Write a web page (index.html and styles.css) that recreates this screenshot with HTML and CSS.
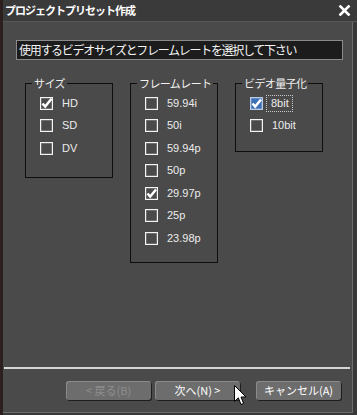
FILE: index.html
```html
<!DOCTYPE html>
<html lang="ja">
<head>
    <meta charset="UTF-8">
    <meta name="viewport" content="width=device-width, initial-scale=1.0">
    <title>プロジェクトプリセット作成</title>
    <link rel="stylesheet" href="styles.css">
</head>
<body>
    <div class="window">
        <div class="titlebar">
            <span class="title">プロジェクトプリセット作成</span>
            <svg class="close" width="13" height="11" viewBox="0 0 13 11">
                <path d="M1.5 0.5 L11.5 10.5 M11.5 0.5 L1.5 10.5" stroke="#fff" stroke-width="2.6"/>
            </svg>
        </div>

        <div class="client">
            <div class="prompt">使用するビデオサイズとフレームレートを選択して下さい</div>

            <div class="groups">
                <fieldset class="group group-size">
                    <legend>サイズ</legend>
                    <div class="row"><span class="box checked"><svg viewBox="0 0 13 13"><polyline points="2.5,6.5 5.2,9.6 11.5,1.8"/></svg></span><span class="label">HD</span></div>
                    <div class="row"><span class="box"></span><span class="label">SD</span></div>
                    <div class="row"><span class="box"></span><span class="label">DV</span></div>
                </fieldset>

                <fieldset class="group group-rate">
                    <legend>フレームレート</legend>
                    <div class="row"><span class="box"></span><span class="label">59.94i</span></div>
                    <div class="row"><span class="box"></span><span class="label">50i</span></div>
                    <div class="row"><span class="box"></span><span class="label">59.94p</span></div>
                    <div class="row"><span class="box"></span><span class="label">50p</span></div>
                    <div class="row"><span class="box checked"><svg viewBox="0 0 13 13"><polyline points="2.5,6.5 5.2,9.6 11,2.5"/></svg></span><span class="label">29.97p</span></div>
                    <div class="row"><span class="box"></span><span class="label">25p</span></div>
                    <div class="row"><span class="box"></span><span class="label">23.98p</span></div>
                </fieldset>

                <fieldset class="group group-bits">
                    <legend>ビデオ量子化</legend>
                    <div class="row"><span class="box checked blue"><svg viewBox="0 0 13 13"><polyline points="2.5,6.5 5.2,9.6 11,2.5"/></svg></span><span class="label focus">8bit</span></div>
                    <div class="row"><span class="box"></span><span class="label">10bit</span></div>
                </fieldset>
            </div>

            <div class="separator"></div>

            <div class="buttons">
                <button class="btn" disabled>&lt;&nbsp;戻る(B)</button>
                <button class="btn">次へ(N)&nbsp;&gt;</button>
                <button class="btn btn-cancel">キャンセル(A)</button>
            </div>
        </div>

        <!-- mouse pointer over the next button -->
        <svg class="cursor" width="13" height="21" viewBox="0 0 13 21">
            <path d="M0.5 0.5 L0.5 16.5 L4.3 12.8 L7 19.5 L9.6 18.4 L7 12 L12 12 Z" fill="#fff" stroke="#000" stroke-width="1"/>
        </svg>
    </div>
</body>
</html>
```

FILE: styles.css
```css
body {
    margin: 0;
    padding: 0;
    background-color: #3a3a3a;
    font-family: "Liberation Sans", "Noto Sans CJK JP", sans-serif;
}
.window {
    position: relative;
    width: 357px;
    height: 415px;
    box-sizing: border-box;
    border-left: 3px solid #2b201e;
    background-color: #393939;
    display: flex;
    flex-direction: column;
    overflow: hidden;
}
.titlebar {
    height: 21px;
    border-bottom: 1px solid #575757;
    background-color: #3a3a3a;
    display: flex;
    align-items: center;
    justify-content: space-between;
    padding: 0 6px 0 2px;
}
.title {
    color: #fff;
    font-family: "Noto Sans CJK JP", sans-serif;
    font-size: 11px;
    font-weight: bold;
    letter-spacing: -1px;
    line-height: 13px;
}
.close {
    display: block;
    margin-top: -1px;
}
.client {
    flex: 1;
    margin-right: 4px;
    margin-bottom: 2px;
    background-color: #4a4a4a;
    border-right: 1px solid #6d6d6d;
    border-bottom: 1px solid #6d6d6d;
    display: flex;
    flex-direction: column;
}
.prompt {
    margin: 18px 9px 0 13px;
    height: 20px;
    box-sizing: border-box;
    background-color: #1c1c1c;
    border: 1px solid #8a8a8a;
    color: #f4f4f4;
    font-family: "Noto Sans CJK JP", sans-serif;
    font-size: 12px;
    letter-spacing: -1.3px;
    line-height: 18px;
    padding-left: 2px;
    white-space: nowrap;
    overflow: hidden;
}
.groups {
    display: flex;
    align-items: flex-start;
    gap: 17px;
    margin: 16px 0 0 22px;
}
.group {
    width: 88px;
    box-sizing: border-box;
    margin: 0;
    padding: 2px 0 0 14px;
    border: 1px solid #0e0e0e;
    min-width: 0;
}
.group legend {
    margin-left: -8px;
    padding: 0 2px;
    color: #f0f0f0;
    font-family: "Noto Sans CJK JP", sans-serif;
    font-size: 11px;
    letter-spacing: -0.6px;
    line-height: 14px;
}
.group-size {
    height: 102px;
}
.group-rate {
    height: 187px;
}
.group-bits {
    height: 76px;
}
.row {
    height: 22.5px;
    display: flex;
    align-items: center;
}
.box {
    width: 13px;
    height: 13px;
    box-sizing: border-box;
    border: 1px solid #f4f4f4;
    box-shadow: inset 0 0 0 0.5px rgba(255, 255, 255, 0.4);
    flex-shrink: 0;
    position: relative;
}
.box svg {
    position: absolute;
    left: -1px;
    top: -1px;
    width: 13px;
    height: 13px;
    overflow: visible;
}
.box polyline {
    fill: none;
    stroke: #fff;
    stroke-width: 2.5;
}
.box.blue {
    background-color: #3d70b4;
    border-color: #b9cbe6;
}
.label {
    margin-left: 9px;
    color: #ececec;
    font-size: 11px;
    line-height: 13px;
}
.label.focus {
    margin-left: 4px;
    padding: 1px 3px 1px 4px;
    outline: 1px dotted #c8c8c8;
}
.separator {
    margin: auto 2px 0 1px;
    height: 2px;
    background-color: #d6d6d6;
}
.buttons {
    display: flex;
    justify-content: flex-end;
    gap: 4px;
    margin: 12px 11px 12px 0;
}
.btn {
    width: 85px;
    height: 19px;
    padding: 0;
    border: none;
    border-radius: 3px;
    background-color: #6d6d6d;
    box-shadow: inset 1px 1px 0 #8a8a8a, 1px 1px 0 #1e1e1e;
    color: #fff;
    font-family: "Noto Sans CJK JP", sans-serif;
    font-size: 11px;
    letter-spacing: 0;
    line-height: 19px;
}
.btn:disabled {
    color: #8e8e8e;
}
.btn-cancel {
    margin-left: 12px;
}
.cursor {
    position: absolute;
    left: 231px;
    top: 385px;
}
```
